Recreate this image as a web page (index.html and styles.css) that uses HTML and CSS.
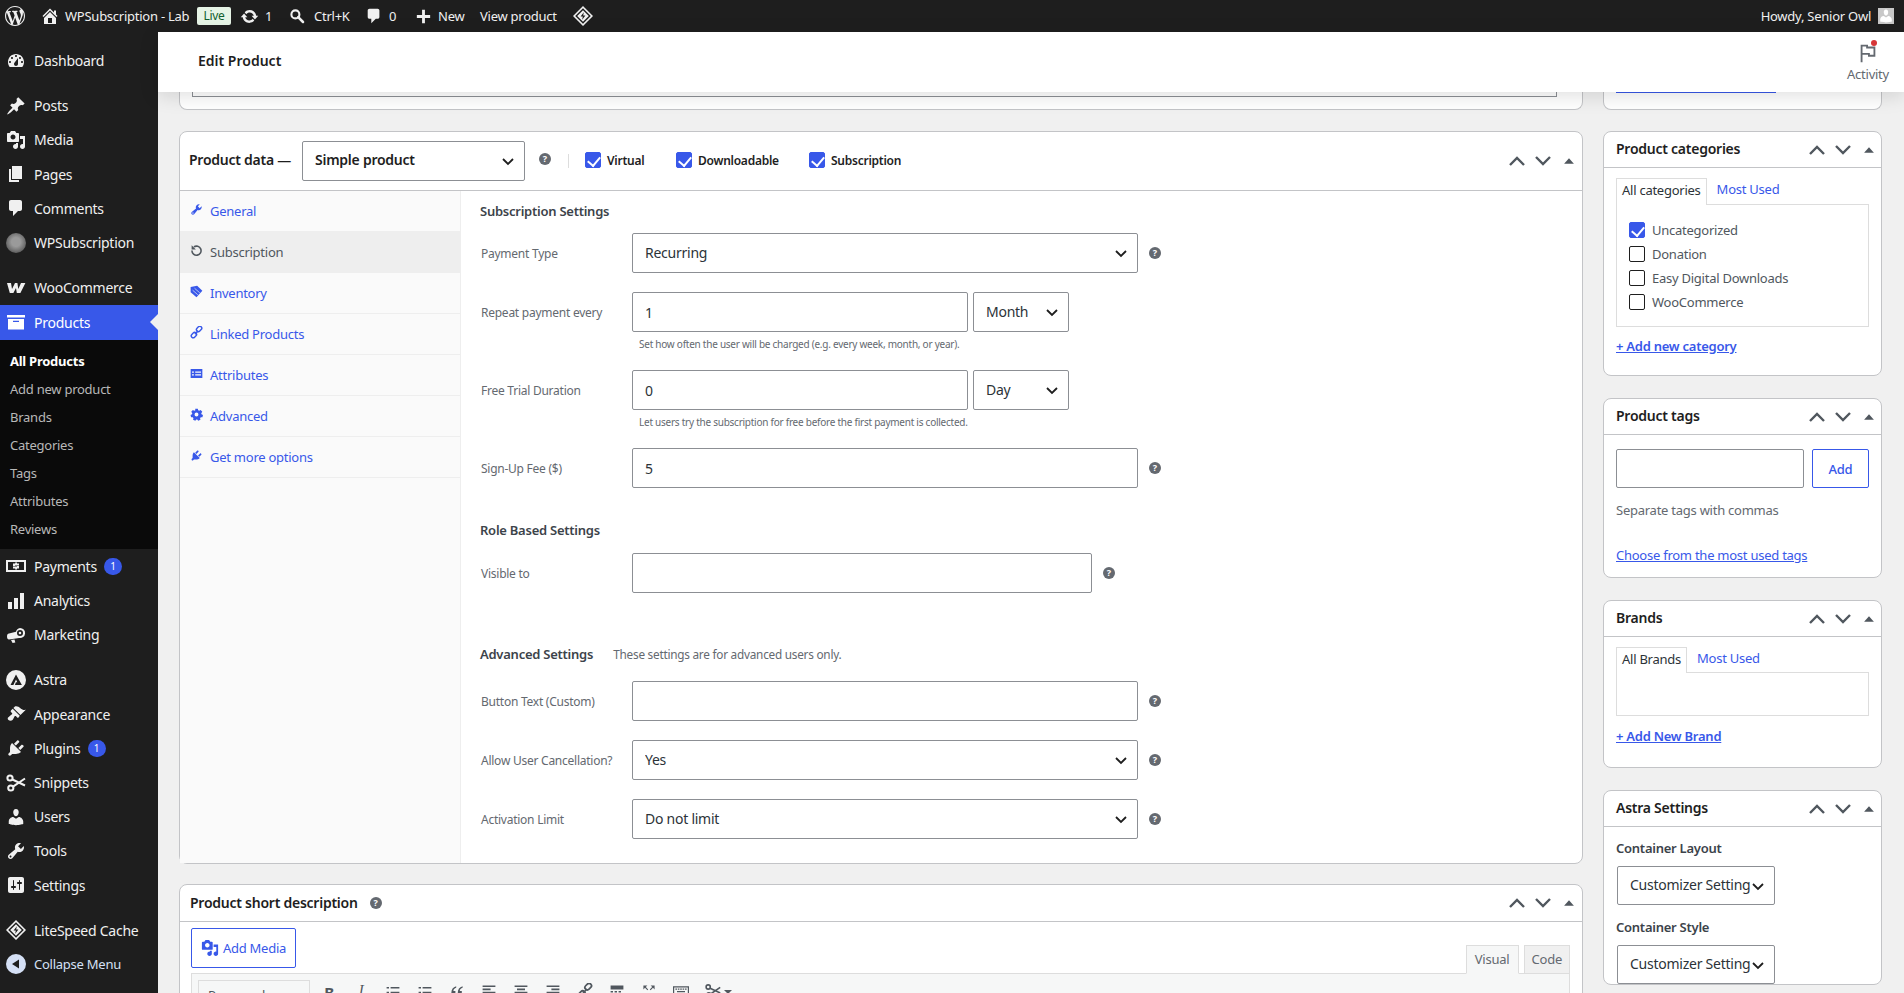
FILE: index.html
```html
<!DOCTYPE html>
<html lang="en">
<head>
  <meta charset="UTF-8" />
  <meta name="viewport" content="width=device-width, initial-scale=1.0" />
  <title>Edit Product</title>
  <link rel="stylesheet" href="styles.css">
</head>
<body>
  <svg class="sprite" xmlns="http://www.w3.org/2000/svg">
    <symbol id="i-wp" viewBox="0 0 20 20"><path d="M20 10c0-5.51-4.49-10-10-10C4.48 0 0 4.49 0 10c0 5.52 4.48 10 10 10 5.51 0 10-4.48 10-10zM7.78 15.37L4.37 6.22c.55-.02 1.17-.08 1.17-.08.5-.06.44-1.13-.06-1.11 0 0-1.45.11-2.37.11-.18 0-.37 0-.58-.01C4.12 2.69 6.87 1.11 10 1.11c2.33 0 4.45.87 6.05 2.34-.68-.11-1.65.39-1.65 1.58 0 .74.45 1.36.9 2.1.35.61.55 1.36.55 2.46 0 1.49-1.4 5-1.4 5l-3.03-8.37c.54-.02.82-.17.82-.17.5-.05.44-1.25-.06-1.22 0 0-1.44.12-2.38.12-.87 0-2.33-.12-2.33-.12-.5-.03-.56 1.2-.06 1.22l.92.08 1.26 3.41zM17.41 10c.24-.64.74-1.87.43-4.25.7 1.29 1.05 2.71 1.05 4.25 0 3.29-1.73 6.24-4.4 7.78.97-2.59 1.94-5.2 2.92-7.78zM6.1 18.09C3.12 16.65 1.11 13.53 1.11 10c0-1.3.23-2.48.72-3.59C3.25 10.3 4.67 14.2 6.1 18.09zm4.03-6.63l2.58 6.98c-.86.29-1.76.45-2.71.45-.79 0-1.57-.11-2.29-.33.81-2.38 1.62-4.74 2.42-7.1z"/></symbol>
    <symbol id="i-home" viewBox="0 0 20 20"><path d="M16 8.5l1.53 1.53-1.06 1.06L10 4.62l-6.47 6.47-1.06-1.06L10 2.5l4 4v-2h2v4zm-6-2.46l6 5.99V18H4v-5.97zM12 17v-5H8v5h4z"/></symbol>
    <symbol id="i-update" viewBox="0 0 20 20"><path d="M10.2 3.28c3.53 0 6.43 2.61 6.92 6h2.08l-3.5 4-3.5-4h2.32c-.45-1.97-2.21-3.45-4.32-3.45-1.45 0-2.73.71-3.54 1.78L4.95 5.66C6.23 4.2 8.11 3.28 10.2 3.28zm-.4 13.44c-3.52 0-6.43-2.61-6.92-6H.8l3.5-4c1.17 1.33 2.33 2.67 3.5 4H5.48c.45 1.97 2.21 3.45 4.32 3.45 1.45 0 2.73-.71 3.54-1.78l1.71 1.95c-1.28 1.46-3.15 2.38-5.25 2.38z"/></symbol>
    <symbol id="i-search" viewBox="0 0 20 20"><circle cx="8" cy="8" r="5" fill="none" stroke="currentColor" stroke-width="2.6"/><path d="M11.5 11.5l6 6" stroke="currentColor" stroke-width="3.2" stroke-linecap="round"/></symbol>
    <symbol id="i-comment" viewBox="0 0 20 20"><path d="M5 2h9c1.1 0 2 .9 2 2v7c0 1.1-.9 2-2 2h-2l-5 5v-5H5c-1.1 0-2-.9-2-2V4c0-1.1.9-2 2-2z"/></symbol>
    <symbol id="i-plus" viewBox="0 0 20 20"><path d="M8.5 3h3v5.5H17v3h-5.5V17h-3v-5.5H3v-3h5.5z"/></symbol>
    <symbol id="i-ls" viewBox="0 0 20 20"><path fill-rule="evenodd" d="M10 0l10 10-10 10L0 10zM10 2.2L2.2 10l7.8 7.8 7.8-7.8zM10 4.2l5.8 5.8-5.8 5.8L4.2 10zM10.8 6.2L7.6 10.4h2.2l-.6 3.4 3.2-4.2h-2.2z"/></symbol>
    <symbol id="i-dash" viewBox="0 0 20 20"><path fill-rule="evenodd" d="M3.76 16h12.48c1.1-1.37 1.76-3.11 1.76-5 0-4.42-3.58-8-8-8s-8 3.58-8 8c0 1.89.66 3.63 1.76 5zM10 4c.55 0 1 .45 1 1s-.45 1-1 1-1-.45-1-1 .45-1 1-1zM6 6c.55 0 1 .45 1 1s-.45 1-1 1-1-.45-1-1 .45-1 1-1zm8 0c.55 0 1 .45 1 1s-.45 1-1 1-1-.45-1-1 .45-1 1-1zm-5.37 5.55L12 7v6c0 1.1-.9 2-2 2s-2-.9-2-2c0-.57.24-1.08.63-1.45zM4 10c.55 0 1 .45 1 1s-.45 1-1 1-1-.45-1-1 .45-1 1-1zm12 0c.55 0 1 .45 1 1s-.45 1-1 1-1-.45-1-1 .45-1 1-1z"/></symbol>
    <symbol id="i-pin" viewBox="0 0 20 20"><path d="M10.44 3.02l1.82-1.82 6.36 6.35-1.83 1.82c-1.05-.68-2.48-.57-3.41.36l-.75.75c-.92.93-1.04 2.35-.35 3.41l-1.83 1.82-2.41-2.41-2.8 2.79c-.42.42-3.38 2.71-3.8 2.29s1.86-3.39 2.28-3.81l2.79-2.79L4.1 9.36l1.83-1.82c1.05.69 2.48.57 3.4-.36l.75-.75c.93-.92 1.05-2.35.36-3.41z"/></symbol>
    <symbol id="i-media" viewBox="0 0 20 20"><path fill-rule="evenodd" d="M13 11V4c0-.55-.45-1-1-1h-1.67L9 1H5L3.67 3H2c-.55 0-1 .45-1 1v7c0 .55.45 1 1 1h10c.55 0 1-.45 1-1zM7 4.5c1.38 0 2.5 1.12 2.5 2.5S8.38 9.5 7 9.5 4.5 8.38 4.5 7 5.62 4.5 7 4.5zM14 6h5v10.5c0 1.38-1.12 2.5-2.5 2.5S14 17.88 14 16.5s1.12-2.5 2.5-2.5c.17 0 .34.02.5.05V9h-3V6zm-4 8.05V13h2v3.5c0 1.38-1.12 2.5-2.5 2.5S7 17.88 7 16.5 8.12 14 9.5 14c.17 0 .34.02.5.05z"/></symbol>
    <symbol id="i-pages" viewBox="0 0 20 20"><path d="M6 15V2h10v13H6zm-1 1h8v2H3V5h2v11z"/></symbol>
    <symbol id="i-woo" viewBox="0 0 20 20"><path d="M1 5h4l1 6 3-6h2.4l.9 6 2.7-6h4.4l-5 10h-3.6l-.8-5-2.6 5H3.8z"/></symbol>
    <symbol id="i-archive" viewBox="0 0 20 20"><path fill-rule="evenodd" d="M19 3v2.5H1V3h18zM2 7h16v10.5H2V7zm11 3V8.8H7V10h6z"/></symbol>
    <symbol id="i-money" viewBox="0 0 20 20"><path fill-rule="evenodd" d="M0 4h20v12H0zM2 6v8h16V6zM13 7.5v1.4H9v.6h4v3H11v.9H9.2v-.9H7v-1.4h4v-.6H7v-3h2.2v-.9H11v.9z"/></symbol>
    <symbol id="i-chart" viewBox="0 0 20 20"><path d="M2 11h4v7H2zM8 7h4v11H8zM14 2h4v16h-4z"/></symbol>
    <symbol id="i-mega" viewBox="0 0 20 20"><path fill-rule="evenodd" d="M14 3a5 5 0 1 1-.9 9.9L3 14.5c-1.2 0-2-1.3-2-3s.8-3 2-3l7-1.8A5 5 0 0 1 14 3zm0 2a3 3 0 1 0 0 6 3 3 0 0 0 0-6zm0 1.7a1.3 1.3 0 1 1 0 2.6 1.3 1.3 0 0 1 0-2.6zM5 15l3.500-.6.8 3.100-2.700.5z"/></symbol>
    <symbol id="i-astra" viewBox="0 0 20 20"><path fill-rule="evenodd" d="M10 0a10 10 0 1 1 0 20 10 10 0 0 1 0-20zM10 4.500L4.500 15h2.900l2.600-5.400 1.300 2.700-1.400 0-1 2.700h7L10 4.500z"/></symbol>
    <symbol id="i-brush" viewBox="0 0 20 20"><path d="M14.480 11.060L7.410 3.990l1.500-1.500c.5-.56 2.300-.47 3.510.32 1.210.8 1.430 1.280 2.910 2.100 1.180.64 2.450 1.260 4.450.85zm-.71.71L6.700 4.700 4.930 6.470c-.39.39-.39 1.020 0 1.410l1.060 1.060c.39.39.39 1.030 0 1.420-.6.6-1.430 1.110-2.210 1.690-.35.26-.7.53-1.010.84C1.430 13.230 1.400 15 2.440 16s3.110 1.060 4.110 0 1.490-3.040 2.110-3.650c.39-.39 1.030-.39 1.420 0l1.060 1.060c.39.39 1.020.39 1.410 0z"/></symbol>
    <symbol id="i-plug" viewBox="0 0 20 20"><path d="M13.110 4.360L9.870 7.600 8 5.730l3.240-3.240c.35-.34 1.050-.2 1.560.32.52.51.66 1.210.31 1.550zm-8 1.770l.91-1.120 9.010 9.010-1.190.84c-.71.71-2.630 1.160-3.820 1.160H6.140L4.900 17.260c-.59.59-1.540.59-2.120 0-.59-.58-.59-1.530 0-2.120l1.240-1.240v-3.880c0-1.130.4-3.190 1.090-3.890zm7.260 3.970l3.240-3.240c.34-.35 1.040-.21 1.550.31.52.51.66 1.210.31 1.550l-3.240 3.250z"/></symbol>
    <symbol id="i-scissors" viewBox="0 0 20 20"><g fill="none" stroke="currentColor" stroke-width="2"><circle cx="4" cy="5" r="2.600"/><circle cx="4.800" cy="15" r="2.600"/><path d="M6.400 6.500L19 12.500M7 13.700L19 5.500"/></g></symbol>
    <symbol id="i-user" viewBox="0 0 20 20"><path d="M10 9.250c-2.270 0-2.730-3.440-2.730-3.440C7 4.020 7.820 2 9.970 2c2.160 0 2.980 2.020 2.710 3.810 0 0-.41 3.440-2.680 3.440zm0 2.570L12.720 10c2.390 0 4.520 2.330 4.520 4.530v2.490s-3.650 1.130-7.240 1.130c-3.650 0-7.240-1.130-7.240-1.130v-2.490c0-2.250 1.940-4.480 4.470-4.480z"/></symbol>
    <symbol id="i-wrench" viewBox="0 0 20 20"><path fill-rule="evenodd" d="M16.680 9.770c-1.340 1.340-3.300 1.670-4.950.99l-5.410 6.520c-.99.99-2.590.99-3.580 0s-.99-2.59 0-3.570l6.520-5.420c-.68-1.650-.35-3.610.99-4.950 1.280-1.280 3.120-1.620 4.720-1.060l-2.890 2.890 2.820 2.820 2.860-2.870c.53 1.580.18 3.390-1.080 4.650zM3.810 16.210c.4.390 1.040.39 1.430 0 .4-.4.4-1.040 0-1.430-.39-.4-1.030-.4-1.430 0-.39.39-.39 1.030 0 1.430z"/></symbol>
    <symbol id="i-sliders" viewBox="0 0 20 20"><path fill-rule="evenodd" d="M18 16V4c0-1.100-.9-2-2-2H4c-1.100 0-2 .9-2 2v12c0 1.100.9 2 2 2h12c1.100 0 2-.9 2-2zM8 11h1c.55 0 1 .45 1 1s-.45 1-1 1H8v1.500c0 .28-.22.5-.5.5s-.5-.22-.5-.5V13H6c-.55 0-1-.45-1-1s.45-1 1-1h1V5.500c0-.28.22-.5.5-.5s.5.22.5.5V11zm5-2h-1c-.55 0-1-.45-1-1s.45-1 1-1h1V5.500c0-.28.22-.5.5-.5s.5.22.5.5V7h1c.55 0 1 .45 1 1s-.45 1-1 1h-1v5.500c0 .28-.22.5-.5.5s-.5-.22-.5-.5V9z"/></symbol>
    <symbol id="i-collapse" viewBox="0 0 20 20"><path fill-rule="evenodd" d="M10 0a10 10 0 1 1 0 20 10 10 0 0 1 0-20zM13 5.500L6 10l7 4.500z"/></symbol>
    <symbol id="i-redo" viewBox="0 0 20 20"><path d="M6 4.500A7 7 0 1 1 3 10" fill="none" stroke="currentColor" stroke-width="2.400"/><path d="M2.500 2v6.500H9z"/></symbol>
    <symbol id="i-tag" viewBox="0 0 20 20"><path d="M11 1l8 8-9 10-9-8V3z"/><path d="M4 8l8 7M7 5l8 7" stroke="#fafafa" stroke-width="1"/></symbol>
    <symbol id="i-link" viewBox="0 0 20 20"><g fill="none" stroke="currentColor" stroke-width="2.200"><rect x="9.500" y="1.500" width="9" height="6" rx="3" transform="rotate(-45 14 4.500)"/><rect x="1.500" y="11" width="9" height="6" rx="3" transform="rotate(-45 6 14)"/><path d="M7.500 12.500l5-5"/></g></symbol>
    <symbol id="i-list" viewBox="0 0 20 20"><path fill-rule="evenodd" d="M1 3h18v14H1zM3 7v2h3V7zm5 0v2h9V7zm-5 4v2h3v-2zm5 0v2h9v-2z"/></symbol>
    <symbol id="i-gear" viewBox="0 0 20 20"><path fill-rule="evenodd" d="M8 1h4l.6 2.600 1.500.7 2.300-1.300 2.500 2.900-1.600 2 .4 1.700 2.300 1.100-.9 3.700-2.500-.1-1.100 1.300.6 2.500-3.500 1.600-1.400-2.100h-1.600L8.200 19.700l-3.500-1.600.6-2.500-1.100-1.300-2.500.1L.8 10.700l2.300-1.100.4-1.700-1.600-2L4.400 3l2.300 1.300 1.500-.7zM10 7a3 3 0 1 0 0 6 3 3 0 0 0 0-6z"/></symbol>
    <symbol id="i-up" viewBox="0 0 20 20"><path d="M3 14l7-7 7 7" fill="none" stroke="currentColor" stroke-width="2.400"/></symbol>
    <symbol id="i-down" viewBox="0 0 20 20"><path d="M3 6l7 7 7-7" fill="none" stroke="currentColor" stroke-width="2.400"/></symbol>
    <symbol id="i-tri" viewBox="0 0 20 20"><path d="M3 14l7-8 7 8z"/></symbol>
    <symbol id="i-flag" viewBox="0 0 24 24"><path d="M4 22V3h8v2h8v11h-8v-2H6v8z M6 5v7h8v2h4V7h-8V5z" fill-rule="evenodd"/></symbol>
    <symbol id="i-ul" viewBox="0 0 20 20"><path d="M2 5h3v2H2zM7 5h11v2H7zM2 11h3v2H2zM7 11h11v2H7z"/></symbol>
    <symbol id="i-quote" viewBox="0 0 20 20"><path d="M9 4C5 5 3 8 3 12v3h5v-5H5.500c0-2 1.500-3.500 3.500-4zM17 4c-4 1-6 4-6 8v3h5v-5h-2.500c0-2 1.500-3.500 3.500-4z"/></symbol>
    <symbol id="i-alignl" viewBox="0 0 20 20"><path d="M2 3h16v2H2zM2 7h10v2H2zM2 11h16v2H2z"/></symbol>
    <symbol id="i-alignc" viewBox="0 0 20 20"><path d="M2 3h16v2H2zM5 7h10v2H5zM2 11h16v2H2z"/></symbol>
    <symbol id="i-alignr" viewBox="0 0 20 20"><path d="M2 3h16v2H2zM8 7h10v2H8zM2 11h16v2H2z"/></symbol>
    <symbol id="i-hr" viewBox="0 0 20 20"><path d="M2 3h16v5H2zM2 10h3v2H2zM7 10h3v2H7zM12 10h3v2h-3zM2 14h16v3H2z"/></symbol>
    <symbol id="i-full" viewBox="0 0 20 20"><path d="M3 3h5l-2 2 3 3-1 1-3-3-2 2zM17 3v5l-2-2-3 3-1-1 3-3-2-2z"/></symbol>
    <symbol id="i-keys" viewBox="0 0 20 20"><path fill-rule="evenodd" d="M0 4h20v10H0zM1.500 5.500v7h17v-7zM3 7h2v1.500H3zM6 7h2v1.500H6zM9 7h2v1.500H9zM12 7h2v1.500h-2zM15 7h2v1.500h-2zM5 10h10v1.500H5z"/></symbol>
  </svg>

  <header class="adminbar">
    <div class="bar-left">
      <svg class="ab-icon ab-wp"><use href="#i-wp"/></svg>
      <svg class="ab-icon ab-home"><use href="#i-home"/></svg>
      <span class="ab-site">WPSubscription - Lab</span>
      <span class="ab-live">Live</span>
      <svg class="ab-icon ab-update"><use href="#i-update"/></svg>
      <span class="ab-count">1</span>
      <svg class="ab-icon ab-search"><use href="#i-search"/></svg>
      <span class="ab-kbd">Ctrl+K</span>
      <svg class="ab-icon ab-comment"><use href="#i-comment"/></svg>
      <span class="ab-zero">0</span>
      <svg class="ab-icon ab-plus"><use href="#i-plus"/></svg>
      <span class="ab-new">New</span>
      <span class="ab-view">View product</span>
      <svg class="ab-icon ab-ls"><use href="#i-ls"/></svg>
    </div>
    <div class="bar-right">
      <span>Howdy, Senior Owl</span>
      <span class="avatar"><svg class="avatar-icon"><use href="#i-user"/></svg></span>
    </div>
  </header>

  <div class="layout">
    <nav class="sidemenu">
      <a class="menu-item"><svg class="menu-icon"><use href="#i-dash"/></svg>Dashboard</a>
      <a class="menu-item sep"><svg class="menu-icon"><use href="#i-pin"/></svg>Posts</a>
      <a class="menu-item"><svg class="menu-icon"><use href="#i-media"/></svg>Media</a>
      <a class="menu-item"><svg class="menu-icon"><use href="#i-pages"/></svg>Pages</a>
      <a class="menu-item"><svg class="menu-icon"><use href="#i-comment"/></svg>Comments</a>
      <a class="menu-item"><span class="menu-logo"></span>WPSubscription</a>
      <a class="menu-item sep"><svg class="menu-icon"><use href="#i-woo"/></svg>WooCommerce</a>
      <a class="menu-item current"><svg class="menu-icon"><use href="#i-archive"/></svg>Products</a>
      <div class="submenu">
        <a class="sub-item sub-current">All Products</a>
        <a class="sub-item">Add new product</a>
        <a class="sub-item">Brands</a>
        <a class="sub-item">Categories</a>
        <a class="sub-item">Tags</a>
        <a class="sub-item">Attributes</a>
        <a class="sub-item">Reviews</a>
      </div>
      <a class="menu-item"><svg class="menu-icon"><use href="#i-money"/></svg>Payments<span class="badge">1</span></a>
      <a class="menu-item"><svg class="menu-icon"><use href="#i-chart"/></svg>Analytics</a>
      <a class="menu-item"><svg class="menu-icon"><use href="#i-mega"/></svg>Marketing</a>
      <a class="menu-item sep"><svg class="menu-icon"><use href="#i-astra"/></svg>Astra</a>
      <a class="menu-item"><svg class="menu-icon"><use href="#i-brush"/></svg>Appearance</a>
      <a class="menu-item"><svg class="menu-icon"><use href="#i-plug"/></svg>Plugins<span class="badge">1</span></a>
      <a class="menu-item"><svg class="menu-icon"><use href="#i-scissors"/></svg>Snippets</a>
      <a class="menu-item"><svg class="menu-icon"><use href="#i-user"/></svg>Users</a>
      <a class="menu-item"><svg class="menu-icon"><use href="#i-wrench"/></svg>Tools</a>
      <a class="menu-item"><svg class="menu-icon"><use href="#i-sliders"/></svg>Settings</a>
      <a class="menu-item sep"><svg class="menu-icon"><use href="#i-ls"/></svg>LiteSpeed Cache</a>
      <a class="menu-item collapse"><svg class="menu-icon"><use href="#i-collapse"/></svg>Collapse Menu</a>
    </nav>

    <div class="page">
      <div class="page-head">
        <h1 class="page-title">Edit Product</h1>
        <div class="activity">
          <span class="activity-icon"><svg class="flag"><use href="#i-flag"/></svg><span class="activity-dot"></span></span>
          <span>Activity</span>
        </div>
      </div>

      <div class="columns">
        <main class="col-main">
          <div class="stub"><div class="stub-field"></div></div>

          <section class="box">
            <div class="data-head">
              <span class="data-title">Product data —</span>
              <select class="field data-type"><option>Simple product</option></select>
              <span class="help help-type"></span>
              <span class="data-divider"></span>
              <label class="type-opt"><input type="checkbox" class="check" checked>Virtual</label>
              <label class="type-opt type-opt-wide"><input type="checkbox" class="check" checked>Downloadable</label>
              <label class="type-opt"><input type="checkbox" class="check" checked>Subscription</label>
              <div class="handles">
                <svg class="handle"><use href="#i-up"/></svg>
                <svg class="handle"><use href="#i-down"/></svg>
                <svg class="handle handle-tri"><use href="#i-tri"/></svg>
              </div>
            </div>
            <div class="data-body">
              <ul class="data-tabs">
                <li class="data-tab"><svg class="tab-icon"><use href="#i-wrench"/></svg>General</li>
                <li class="data-tab active"><svg class="tab-icon"><use href="#i-redo"/></svg>Subscription</li>
                <li class="data-tab"><svg class="tab-icon"><use href="#i-tag"/></svg>Inventory</li>
                <li class="data-tab"><svg class="tab-icon"><use href="#i-link"/></svg>Linked Products</li>
                <li class="data-tab"><svg class="tab-icon"><use href="#i-list"/></svg>Attributes</li>
                <li class="data-tab"><svg class="tab-icon"><use href="#i-gear"/></svg>Advanced</li>
                <li class="data-tab"><svg class="tab-icon"><use href="#i-plug"/></svg>Get more options</li>
              </ul>
              <div class="data-panel">
                <h3 class="panel-title">Subscription Settings</h3>
                <div class="row row-first">
                  <label class="row-label">Payment Type</label>
                  <select class="field field-full"><option>Recurring</option></select>
                  <span class="help"></span>
                </div>
                <div class="row">
                  <label class="row-label">Repeat payment every</label>
                  <input class="field field-num" type="text" value="1">
                  <select class="field field-unit"><option>Month</option></select>
                </div>
                <p class="hint">Set how often the user will be charged (e.g. every week, month, or year).</p>
                <div class="row">
                  <label class="row-label">Free Trial Duration</label>
                  <input class="field field-num" type="text" value="0">
                  <select class="field field-unit"><option>Day</option></select>
                </div>
                <p class="hint">Let users try the subscription for free before the first payment is collected.</p>
                <div class="row">
                  <label class="row-label">Sign-Up Fee ($)</label>
                  <input class="field field-full" type="text" value="5">
                  <span class="help"></span>
                </div>

                <h3 class="panel-title panel-role">Role Based Settings</h3>
                <div class="row row-first">
                  <label class="row-label">Visible to</label>
                  <input class="field field-visible" type="text">
                  <span class="help"></span>
                </div>

                <h3 class="panel-title panel-adv">Advanced Settings <span class="panel-note">These settings are for advanced users only.</span></h3>
                <div class="row row-adv">
                  <label class="row-label">Button Text (Custom)</label>
                  <input class="field field-full" type="text">
                  <span class="help"></span>
                </div>
                <div class="row">
                  <label class="row-label">Allow User Cancellation?</label>
                  <select class="field field-full"><option>Yes</option></select>
                  <span class="help"></span>
                </div>
                <div class="row">
                  <label class="row-label">Activation Limit</label>
                  <select class="field field-full"><option>Do not limit</option></select>
                  <span class="help"></span>
                </div>
              </div>
            </div>
          </section>

          <section class="box box-short">
            <div class="box-head short-head">
              <h2 class="box-title">Product short description</h2>
              <span class="help help-title"></span>
              <div class="handles">
                <svg class="handle"><use href="#i-up"/></svg>
                <svg class="handle"><use href="#i-down"/></svg>
                <svg class="handle handle-tri"><use href="#i-tri"/></svg>
              </div>
            </div>
            <div class="short-body">
              <div class="editor-top">
                <button class="btn btn-media"><svg class="btn-icon"><use href="#i-media"/></svg>Add Media</button>
                <div class="editor-tabs">
                  <span class="editor-tab on">Visual</span>
                  <span class="editor-tab">Code</span>
                </div>
              </div>
              <div class="toolbar">
                <span class="tb-format">Paragraph<span class="tb-caret"></span></span>
                <span class="tb-letter tb-bold">B</span>
                <span class="tb-letter tb-ital">I</span>
                <svg class="tb-icon"><use href="#i-ul"/></svg>
                <svg class="tb-icon"><use href="#i-ul"/></svg>
                <svg class="tb-icon"><use href="#i-quote"/></svg>
                <svg class="tb-icon"><use href="#i-alignl"/></svg>
                <svg class="tb-icon"><use href="#i-alignc"/></svg>
                <svg class="tb-icon"><use href="#i-alignr"/></svg>
                <svg class="tb-icon"><use href="#i-link"/></svg>
                <svg class="tb-icon"><use href="#i-hr"/></svg>
                <svg class="tb-icon"><use href="#i-full"/></svg>
                <svg class="tb-icon"><use href="#i-keys"/></svg>
                <svg class="tb-icon tb-icon-last"><use href="#i-scissors"/></svg>
                <span class="tb-more"></span>
              </div>
            </div>
          </section>
        </main>

        <aside class="col-side">
          <div class="stub stub-side"><span class="stub-link"></span></div>

          <section class="box side-box">
            <div class="box-head">
              <h2 class="box-title">Product categories</h2>
              <div class="handles">
                <svg class="handle"><use href="#i-up"/></svg>
                <svg class="handle"><use href="#i-down"/></svg>
                <svg class="handle handle-tri"><use href="#i-tri"/></svg>
              </div>
            </div>
            <div class="side-body cat-body">
              <div class="side-tabs">
                <span class="side-tab on">All categories</span>
                <span class="side-tab">Most Used</span>
              </div>
              <div class="side-panel cat-panel">
                <label class="cat-item"><input type="checkbox" class="check" checked>Uncategorized</label>
                <label class="cat-item"><input type="checkbox" class="check">Donation</label>
                <label class="cat-item"><input type="checkbox" class="check">Easy Digital Downloads</label>
                <label class="cat-item"><input type="checkbox" class="check">WooCommerce</label>
              </div>
              <a class="add-link">+ Add new category</a>
            </div>
          </section>

          <section class="box side-box">
            <div class="box-head">
              <h2 class="box-title">Product tags</h2>
              <div class="handles">
                <svg class="handle"><use href="#i-up"/></svg>
                <svg class="handle"><use href="#i-down"/></svg>
                <svg class="handle handle-tri"><use href="#i-tri"/></svg>
              </div>
            </div>
            <div class="side-body tag-body">
              <div class="tag-row">
                <input class="field tag-input" type="text">
                <button class="btn btn-add">Add</button>
              </div>
              <p class="tag-note">Separate tags with commas</p>
              <a class="tag-link">Choose from the most used tags</a>
            </div>
          </section>

          <section class="box side-box">
            <div class="box-head">
              <h2 class="box-title">Brands</h2>
              <div class="handles">
                <svg class="handle"><use href="#i-up"/></svg>
                <svg class="handle"><use href="#i-down"/></svg>
                <svg class="handle handle-tri"><use href="#i-tri"/></svg>
              </div>
            </div>
            <div class="side-body brand-body">
              <div class="side-tabs">
                <span class="side-tab on">All Brands</span>
                <span class="side-tab">Most Used</span>
              </div>
              <div class="side-panel brand-panel"></div>
              <a class="add-link">+ Add New Brand</a>
            </div>
          </section>

          <section class="box side-box">
            <div class="box-head">
              <h2 class="box-title">Astra Settings</h2>
              <div class="handles">
                <svg class="handle"><use href="#i-up"/></svg>
                <svg class="handle"><use href="#i-down"/></svg>
                <svg class="handle handle-tri"><use href="#i-tri"/></svg>
              </div>
            </div>
            <div class="side-body astra-body">
              <h4 class="astra-label">Container Layout</h4>
              <select class="field astra-select"><option>Customizer Setting</option></select>
              <h4 class="astra-label">Container Style</h4>
              <select class="field astra-select"><option>Customizer Setting</option></select>
            </div>
          </section>
        </aside>
      </div>
    </div>
  </div>
</body>
</html>
```

FILE: styles.css
```css
* {
  box-sizing: border-box;
}
html, body {
  height: 993px;
  overflow: hidden;
}
body {
  margin: 0;
  background: #f0f0f0;
  font-family: "Noto Sans", "Open Sans", sans-serif;
  font-size: 13px;
  letter-spacing: -0.25px;
  color: #3c434a;
}
input, select, button {
  letter-spacing: inherit;
}
h1, h2, h3, h4, p, ul {
  margin: 0;
  padding: 0;
}
ul {
  list-style: none;
}
.sprite {
  display: none;
}
svg {
  fill: currentColor;
  flex: none;
}

/* admin bar */
.adminbar {
  height: 32px;
  background: #1e1e1e;
  color: #f0f0f0;
  display: flex;
  justify-content: space-between;
  align-items: center;
  font-size: 13px;
  letter-spacing: -0.25px;
}
.bar-left, .bar-right {
  display: flex;
  align-items: center;
}
.ab-icon {
  width: 20px;
  height: 20px;
}
.ab-wp { margin-left: 5px; }
.ab-home { margin-left: 15px; width: 20px; height: 20px; }
.ab-site { margin-left: 5px; width: 132px; white-space: nowrap; }
.ab-live {
  width: 34px;
  height: 18px;
  line-height: 17px;
  text-align: center;
  background: #e6f4e6;
  color: #0f5f2e;
  border-radius: 2px;
  font-size: 12px;
}
.ab-update { margin-left: 9px; width: 19px; height: 19px; }
.ab-count { margin-left: 6px; width: 18px; }
.ab-search { margin-left: 6px; width: 16px; height: 16px; }
.ab-kbd { margin-left: 9px; width: 47px; }
.ab-comment { margin-left: 4px; width: 18px; height: 18px; }
.ab-zero { margin-left: 6px; width: 24px; }
.ab-plus { margin-left: 1px; width: 19px; height: 19px; }
.ab-new { margin-left: 5px; width: 42px; }
.ab-view { width: 85px; white-space: nowrap; }
.ab-ls { margin-left: 8px; }
.bar-right {
  padding-right: 10px;
  gap: 7px;
}
.avatar {
  width: 16px;
  height: 16px;
  background: #c8c8c8;
  color: #fff;
  display: flex;
}
.avatar-icon {
  width: 16px;
  height: 16px;
}

/* left menu */
.layout {
  display: flex;
  height: 961px;
}
.sidemenu {
  width: 158px;
  flex: none;
  background: #1e1e1e;
  padding-top: 11.5px;
  color: #f0f0f0;
  font-size: 14px;
}
.menu-item {
  height: 34.2px;
  display: flex;
  align-items: center;
  position: relative;
}
.menu-item.sep {
  margin-top: 11px;
}
.menu-icon {
  width: 20px;
  height: 20px;
  margin: 0 8px 0 6px;
}
.menu-logo {
  width: 20px;
  height: 20px;
  margin: 0 8px 0 6px;
  border-radius: 50%;
  background: radial-gradient(circle at 50% 45%, #9a9a9a 30%, #646464 70%);
}
.menu-item.current {
  background: #3858e9;
  color: #fff;
  height: 35px;
}
.menu-item.current::after {
  content: "";
  position: absolute;
  right: 0;
  top: 9px;
  border: 8px solid transparent;
  border-right-color: #f0f0f0;
  border-left-width: 0;
}
.submenu {
  background: #0a0a0a;
  height: 209.5px;
  padding-top: 7px;
  font-size: 13px;
  color: #b8b8b8;
}
.sub-item {
  display: block;
  height: 28.1px;
  line-height: 28px;
  padding-left: 10px;
}
.sub-current {
  color: #fff;
  font-weight: 700;
}
.badge {
  margin-left: 7px;
  width: 18px;
  height: 17px;
  line-height: 17px;
  border-radius: 9px;
  background: #3858e9;
  color: #fff;
  font-size: 10px;
  text-align: center;
}
.collapse {
  color: #d5e0f5;
  font-size: 13px;
  margin-top: -0.5px;
}

/* page */
.page {
  flex: 1;
  min-width: 0;
}
.page-head {
  height: 60px;
  background: #fff;
  display: flex;
  align-items: center;
  justify-content: space-between;
  padding-left: 40px;
  position: relative;
  z-index: 2;
  box-shadow: 0 4px 18px rgba(0, 0, 0, 0.13);
}
.page-title {
  font-size: 14px;
  font-weight: 600;
  letter-spacing: 0;
  color: #1e1e1e;
  margin-top: -3px;
}
.activity {
  width: 58px;
  margin-right: 7px;
  display: flex;
  flex-direction: column;
  align-items: center;
  font-size: 13px;
  color: #646970;
  margin-top: 1px;
}
.activity-icon {
  position: relative;
  display: flex;
  height: 22px;
  margin-bottom: 1px;
}
.flag {
  width: 22px;
  height: 22px;
}
.activity-dot {
  position: absolute;
  top: -2px;
  right: 2px;
  width: 6px;
  height: 6px;
  border-radius: 50%;
  background: #d63638;
}
.columns {
  display: flex;
  gap: 20px;
  padding: 0 22px 0 21px;
}
.col-main {
  flex: 1;
  min-width: 0;
}
.col-side {
  width: 279px;
  flex: none;
}
.stub {
  height: 18px;
  background: #fff;
  border: 1px solid #c3c4c7;
  border-top: 0;
  border-radius: 0 0 8px 8px;
  padding: 0 25px 0 12px;
  overflow: hidden;
}
.stub-field {
  height: 5px;
  border: 1px solid #8c8f94;
  border-top: 0;
}
.stub-side {
  padding-right: 0;
}
.stub-link {
  display: block;
  width: 160px;
  height: 0;
  border-bottom: 1px solid #3858e9;
}

.box {
  margin-top: 21px;
  background: #fff;
  border: 1px solid #c3c4c7;
  border-radius: 8px;
}
.side-box {
  margin-top: 21px;
}
.side-box + .side-box {
  margin-top: 22px;
}
.box-short {
  margin-top: 20px;
}

/* product data */
.data-head {
  height: 59px;
  display: flex;
  align-items: center;
  padding-left: 9px;
  border-bottom: 1px solid #c3c4c7;
}
.data-title {
  width: 113px;
  margin-top: -3px;
  font-size: 14px;
  font-weight: 600;
  color: #1e1e1e;
  white-space: nowrap;
}
.field {
  height: 40px;
  padding: 0 12px;
  border: 1px solid #8c8f94;
  border-radius: 2px;
  background: #fff;
  font-family: inherit;
  font-size: 14px;
  color: #2c3338;
}
select.field {
  appearance: none;
  padding-right: 0;
  padding-bottom: 2px;
  background-image: url("data:image/svg+xml,%3Csvg xmlns='http://www.w3.org/2000/svg' width='20' height='20'%3E%3Cpath d='M5 8l5 5 5-5' fill='none' stroke='%231e1e1e' stroke-width='1.800'/%3E%3C/svg%3E");
  background-repeat: no-repeat;
  background-position: right 6px center;
}
.data-type {
  width: 223px;
  font-weight: 600;
  color: #1e1e1e;
}
select.data-type {
  padding-bottom: 3px;
}
.help {
  width: 12px;
  height: 12px;
  margin-left: 11px;
  border-radius: 50%;
  background: #646970;
  color: #fff;
  font-size: 9px;
  font-weight: 700;
  line-height: 12px;
  letter-spacing: 0;
  text-align: center;
  flex: none;
}
.help::before {
  content: "?";
}
.help-type {
  margin-left: 14px;
  margin-top: -4px;
}
.help-title {
  margin-left: 12px;
}
.data-divider {
  width: 1px;
  height: 14px;
  margin: 0 16px 0 17px;
  background: #ddd;
}
.type-opt {
  width: 91px;
  margin-top: -2px;
  display: flex;
  align-items: center;
  gap: 6px;
  font-size: 12px;
  font-weight: 600;
  color: #1e1e1e;
  white-space: nowrap;
}
.type-opt-wide {
  width: 133px;
}
.check {
  appearance: none;
  width: 16px;
  height: 16px;
  margin: 0;
  border: 1px solid #1e1e1e;
  border-radius: 2px;
  background: #fff;
  position: relative;
  flex: none;
}
.check:checked {
  background: #3858e9;
  border-color: #3858e9;
}
.check:checked::before {
  content: "";
  position: absolute;
  left: 4px;
  top: 1px;
  width: 6px;
  height: 10px;
  border: solid #fff;
  border-width: 0 2px 2px 0;
  transform: rotate(40deg);
}
.handles {
  margin-left: auto;
  display: flex;
  align-items: center;
  color: #50575e;
}
.handle {
  width: 26px;
  height: 20px;
}
.handle-tri {
  height: 14px;
}
.side-box .handles {
  margin-right: -1px;
}

.data-body {
  display: flex;
}
.data-tabs {
  width: 281px;
  flex: none;
  background: #fafafa;
  border-right: 1px solid #eee;
}
.data-tab {
  height: 41px;
  display: flex;
  align-items: center;
  border-bottom: 1px solid #eee;
  padding: 0 0 0 10px;
  color: #3858e9;
  white-space: nowrap;
}
.data-tab.active {
  background: #eee;
  color: #50575e;
  border-bottom-color: #eee;
}
.tab-icon {
  width: 13px;
  height: 13px;
  margin-right: 7px;
  margin-top: -4px;
}
.data-panel {
  flex: 1;
  padding: 10px 0 24px 19px;
}
.panel-title {
  height: 20px;
  line-height: 20px;
  font-size: 13px;
  font-weight: 600;
  color: #3c434a;
}
.panel-role {
  margin-top: 32px;
}
.panel-adv {
  margin-top: 51px;
}
.panel-note {
  margin-left: 17px;
  font-size: 11.8px;
  font-weight: 400;
  color: #646970;
}
.row {
  display: flex;
  align-items: center;
  margin-top: 19px;
}
.row-first {
  margin-top: 12px;
}
.panel-role + .row-first {
  margin-top: 13px;
}
.row-adv {
  margin-top: 17px;
}
.row-label {
  width: 152px;
  padding-left: 1px;
  flex: none;
  font-size: 12px;
  color: #646970;
  white-space: nowrap;
}
.field-full { width: 506px; }
.field-num { width: 336px; }
.field-unit { width: 96px; margin-left: 5px; }
.field-visible { width: 460px; }
.hint {
  padding: 5px 0 0 159px;
  line-height: 14px;
  font-size: 10px;
  color: #646970;
}

/* short description */
.box-head {
  height: 36px;
  display: flex;
  align-items: center;
  padding-left: 12px;
  border-bottom: 1px solid #c3c4c7;
}
.short-head {
  height: 37px;
  padding-left: 10px;
}
.box-title {
  font-size: 14px;
  font-weight: 600;
  color: #1e1e1e;
  margin-top: -2px;
}
.short-body {
  padding: 6px 12px 0 11px;
}
.editor-top {
  display: flex;
  justify-content: space-between;
  height: 45px;
}
.btn {
  font-family: inherit;
  background: #fff;
  color: #3858e9;
  border: 1px solid #3858e9;
  border-radius: 2px;
  font-size: 13px;
}
.btn-media {
  width: 105px;
  height: 40px;
  display: flex;
  align-items: center;
  justify-content: center;
  gap: 4px;
  padding: 0;
}
.btn-icon {
  width: 18px;
  height: 18px;
}
.editor-tabs {
  display: flex;
  align-self: flex-end;
  gap: 5px;
}
.editor-tab {
  height: 29px;
  line-height: 26px;
  padding: 0 7px;
  border: 1px solid #ddd;
  background: #f0f0f0;
  color: #646970;
  font-size: 13px;
  margin-bottom: -1px;
  position: relative;
}
.editor-tab.on {
  background: #f6f7f7;
  border-bottom-color: #f6f7f7;
  width: 53px;
  text-align: center;
}
.toolbar {
  height: 60px;
  background: #f6f7f7;
  border: 1px solid #ddd;
  padding: 6px 0 0 6px;
  display: flex;
  align-items: flex-start;
  color: #50575e;
}
.tb-format {
  width: 112px;
  height: 30px;
  margin-right: 3px;
  padding: 5px 0 0 9px;
  border: 1px solid #ddd;
  background: #f6f7f7;
  position: relative;
  color: #50575e;
}
.tb-caret {
  position: absolute;
  right: 5px;
  top: 13px;
  border: 4px solid transparent;
  border-top-color: #50575e;
  border-bottom-width: 0;
}
.tb-letter {
  width: 32px;
  text-align: center;
  padding-top: 2px;
  font-family: "Liberation Serif", serif;
  font-size: 15px;
}
.tb-bold { font-weight: 700; font-family: "Noto Sans", sans-serif; }
.tb-ital { font-style: italic; }
.tb-icon {
  width: 16px;
  height: 16px;
  margin: 3px 8px 0;
}
.tb-icon-last {
  margin-right: 3px;
}
.tb-more {
  margin-top: 10px;
  border: 4px solid transparent;
  border-top-color: #50575e;
  border-bottom-width: 0;
}

/* side boxes */
.side-body {
  padding: 10px 12px 0 12px;
}
.side-tabs {
  display: flex;
  height: 26px;
  align-items: stretch;
  position: relative;
}
.side-tab {
  padding: 0 5px;
  line-height: 23px;
  margin-right: 5px;
  color: #3858e9;
  font-size: 13px;
  white-space: nowrap;
}
.side-tab.on {
  color: #2c3338;
  background: #fff;
  border: 1px solid #ddd;
  border-bottom: 0;
  margin-bottom: -1px;
  position: relative;
  z-index: 1;
}
.side-panel {
  border: 1px solid #ddd;
}
.cat-panel {
  height: 123px;
  padding-top: 17px;
}
.cat-item {
  height: 24px;
  display: flex;
  gap: 7px;
  padding-left: 12px;
  font-size: 13px;
  line-height: 17px;
  color: #50575e;
  white-space: nowrap;
}
.add-link {
  display: block;
  height: 20px;
  line-height: 20px;
  margin-top: 9px;
  font-weight: 600;
  font-size: 13px;
  color: #3858e9;
  text-decoration: underline;
}
.cat-body {
  padding-bottom: 19px;
}
.tag-body {
  padding-top: 14px;
  padding-bottom: 12px;
}
.tag-row {
  display: flex;
  gap: 8px;
}
.tag-input {
  width: 188px;
  height: 39px;
}
.btn-add {
  width: 58px;
  height: 39px;
  font-weight: 500;
}
.tag-note {
  margin-top: 12px;
  line-height: 20px;
  font-size: 13px;
  color: #646970;
}
.tag-link {
  display: block;
  margin-top: 25px;
  line-height: 20px;
  color: #3858e9;
  font-size: 13px;
  text-decoration: underline;
}
.brand-body {
  padding-bottom: 21px;
}
.brand-body .side-tabs {
  height: 25px;
}
.brand-panel {
  height: 44px;
}
.brand-body .add-link {
  margin-top: 10px;
}
.astra-body {
  padding-top: 11px;
}
.astra-label {
  height: 20px;
  line-height: 20px;
  font-size: 13px;
  font-weight: 600;
  color: #3c434a;
  margin-top: 12px;
}
.astra-label:first-child {
  margin-top: 0;
}
.astra-select {
  display: block;
  width: 158px;
  height: 39px;
  margin: 8px 0 0 1px;
  background-position: right 4px center;
  color: #2c3338;
}
```
